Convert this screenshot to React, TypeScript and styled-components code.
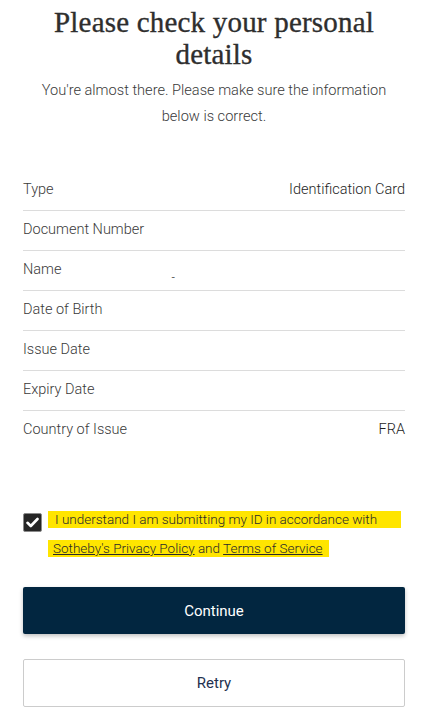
import * as React from 'react';
import styled, { createGlobalStyle } from 'styled-components';

const GlobalStyle = createGlobalStyle`
  html, body {
    margin: 0;
    padding: 0;
    background: #ffffff;
  }
  body {
    font-family: Roboto, "Liberation Sans", sans-serif;
    color: #333333;
  }
`;

const Page = styled.div`
  width: 430px;
  min-height: 718px;
  box-sizing: border-box;
  padding: 6px 25px 0 23px;
  display: flex;
  flex-direction: column;
`;

const Title = styled.h1`
  margin: 0;
  font-family: "Liberation Serif", "DejaVu Serif", serif;
  font-weight: 400;
  font-size: 29px;
  line-height: 32px;
  text-align: center;
  color: #2e2e2e;
  letter-spacing: 0.2px;
  -webkit-text-stroke: 0.35px #2e2e2e;
`;

const Subtitle = styled.p`
  margin: 7px 0 0;
  font-size: 14.6px;
  line-height: 26px;
  font-weight: 300;
  color: #3a3a3a;
  text-align: center;
`;

const DetailsList = styled.dl`
  margin: 42px 0 0;
  padding: 0;
  display: flex;
  flex-direction: column;
`;

const Row = styled.div<{ $last?: boolean }>`
  height: 40px;
  box-sizing: border-box;
  padding-bottom: 3px;
  display: flex;
  align-items: center;
  justify-content: space-between;
  border-bottom: ${p => (p.$last ? 'none' : '1px solid #dcdcdc')};
`;

const Label = styled.dt`
  font-size: 14.5px;
  font-weight: 300;
  color: #3a3a3a;
`;

const Value = styled.dd<{ $offset?: boolean }>`
  margin: 0;
  font-size: 14.5px;
  font-weight: 300;
  color: #1e1e1e;
  ${p =>
    p.$offset &&
    `
    flex: 1;
    padding-left: 110px;
    padding-top: 18px;
    font-size: 12px;
  `}
`;

const Consent = styled.label`
  margin-top: 60px;
  display: flex;
  align-items: flex-start;
  gap: 6px;
`;

const Box = styled.span`
  flex: none;
  width: 19px;
  height: 19px;
  margin-top: 2px;
  box-sizing: border-box;
  border: 1px solid #8a8a8a;
  border-radius: 2px;
  background: #262626;
  display: flex;
  align-items: center;
  justify-content: center;
`;

const ConsentText = styled.span`
  display: flex;
  flex-direction: column;
  align-items: flex-start;
  font-size: 13.5px;
  font-weight: 300;
  color: #2a2a2a;
`;

const Highlight = styled.span<{ $pad: string }>`
  display: block;
  background: #ffe500;
  line-height: 17px;
  padding: ${p => p.$pad};
`;

const Line = styled.span`
  display: block;
  height: 29px;
`;

const Link = styled.a`
  color: #2a2a2a;
  text-decoration: underline;
`;

const Button = styled.button<{ $primary?: boolean }>`
  height: ${p => (p.$primary ? 47 : 48)}px;
  margin-top: ${p => (p.$primary ? 18 : 25)}px;
  width: 100%;
  border: ${p => (p.$primary ? 'none' : '1px solid #cccccc')};
  border-radius: 2px;
  background: ${p => (p.$primary ? '#022640' : '#ffffff')};
  color: ${p => (p.$primary ? '#ffffff' : '#1f3150')};
  font-family: Roboto, "Liberation Sans", sans-serif;
  font-weight: 400;
  font-size: 15px;
  box-shadow: ${p => (p.$primary ? '0 2px 4px rgba(0, 0, 0, 0.25)' : 'none')};
  cursor: pointer;
`;

const details: { label: string; value?: string; offset?: boolean }[] = [
  { label: 'Type', value: 'Identification Card' },
  { label: 'Document Number' },
  { label: 'Name', value: '-', offset: true },
  { label: 'Date of Birth' },
  { label: 'Issue Date' },
  { label: 'Expiry Date' },
  { label: 'Country of Issue', value: 'FRA' },
];

const CheckIcon = () => (
  <svg width="13" height="11" viewBox="0 0 13 11">
    <path d="M1.5 5.8 L4.8 9 L11.5 2" stroke="#ffffff" strokeWidth="2.6" fill="none" strokeLinecap="round" strokeLinejoin="round" />
  </svg>
);

const App: React.FC = () => (
  <>
    <GlobalStyle />
    <Page>
      <Title>
        Please check your personal
        <br />
        details
      </Title>
      <Subtitle>
        You're almost there. Please make sure the information
        <br />
        below is correct.
      </Subtitle>

      <DetailsList>
        {details.map((d, i) => (
          <Row key={d.label} $last={i === details.length - 1}>
            <Label>{d.label}</Label>
            {d.value && <Value $offset={d.offset}>{d.value}</Value>}
          </Row>
        ))}
      </DetailsList>

      <Consent>
        <Box>
          <CheckIcon />
        </Box>
        <ConsentText>
          <Line>
            <Highlight $pad="0 24px 0 7px">I understand I am submitting my ID in accordance with</Highlight>
          </Line>
          <Line>
            <Highlight $pad="0 6px 0 5px">
              <Link>Sotheby's Privacy Policy</Link> and <Link>Terms of Service</Link>
            </Highlight>
          </Line>
        </ConsentText>
      </Consent>

      <Button $primary>Continue</Button>
      <Button>Retry</Button>
    </Page>
  </>
);

export default App;
